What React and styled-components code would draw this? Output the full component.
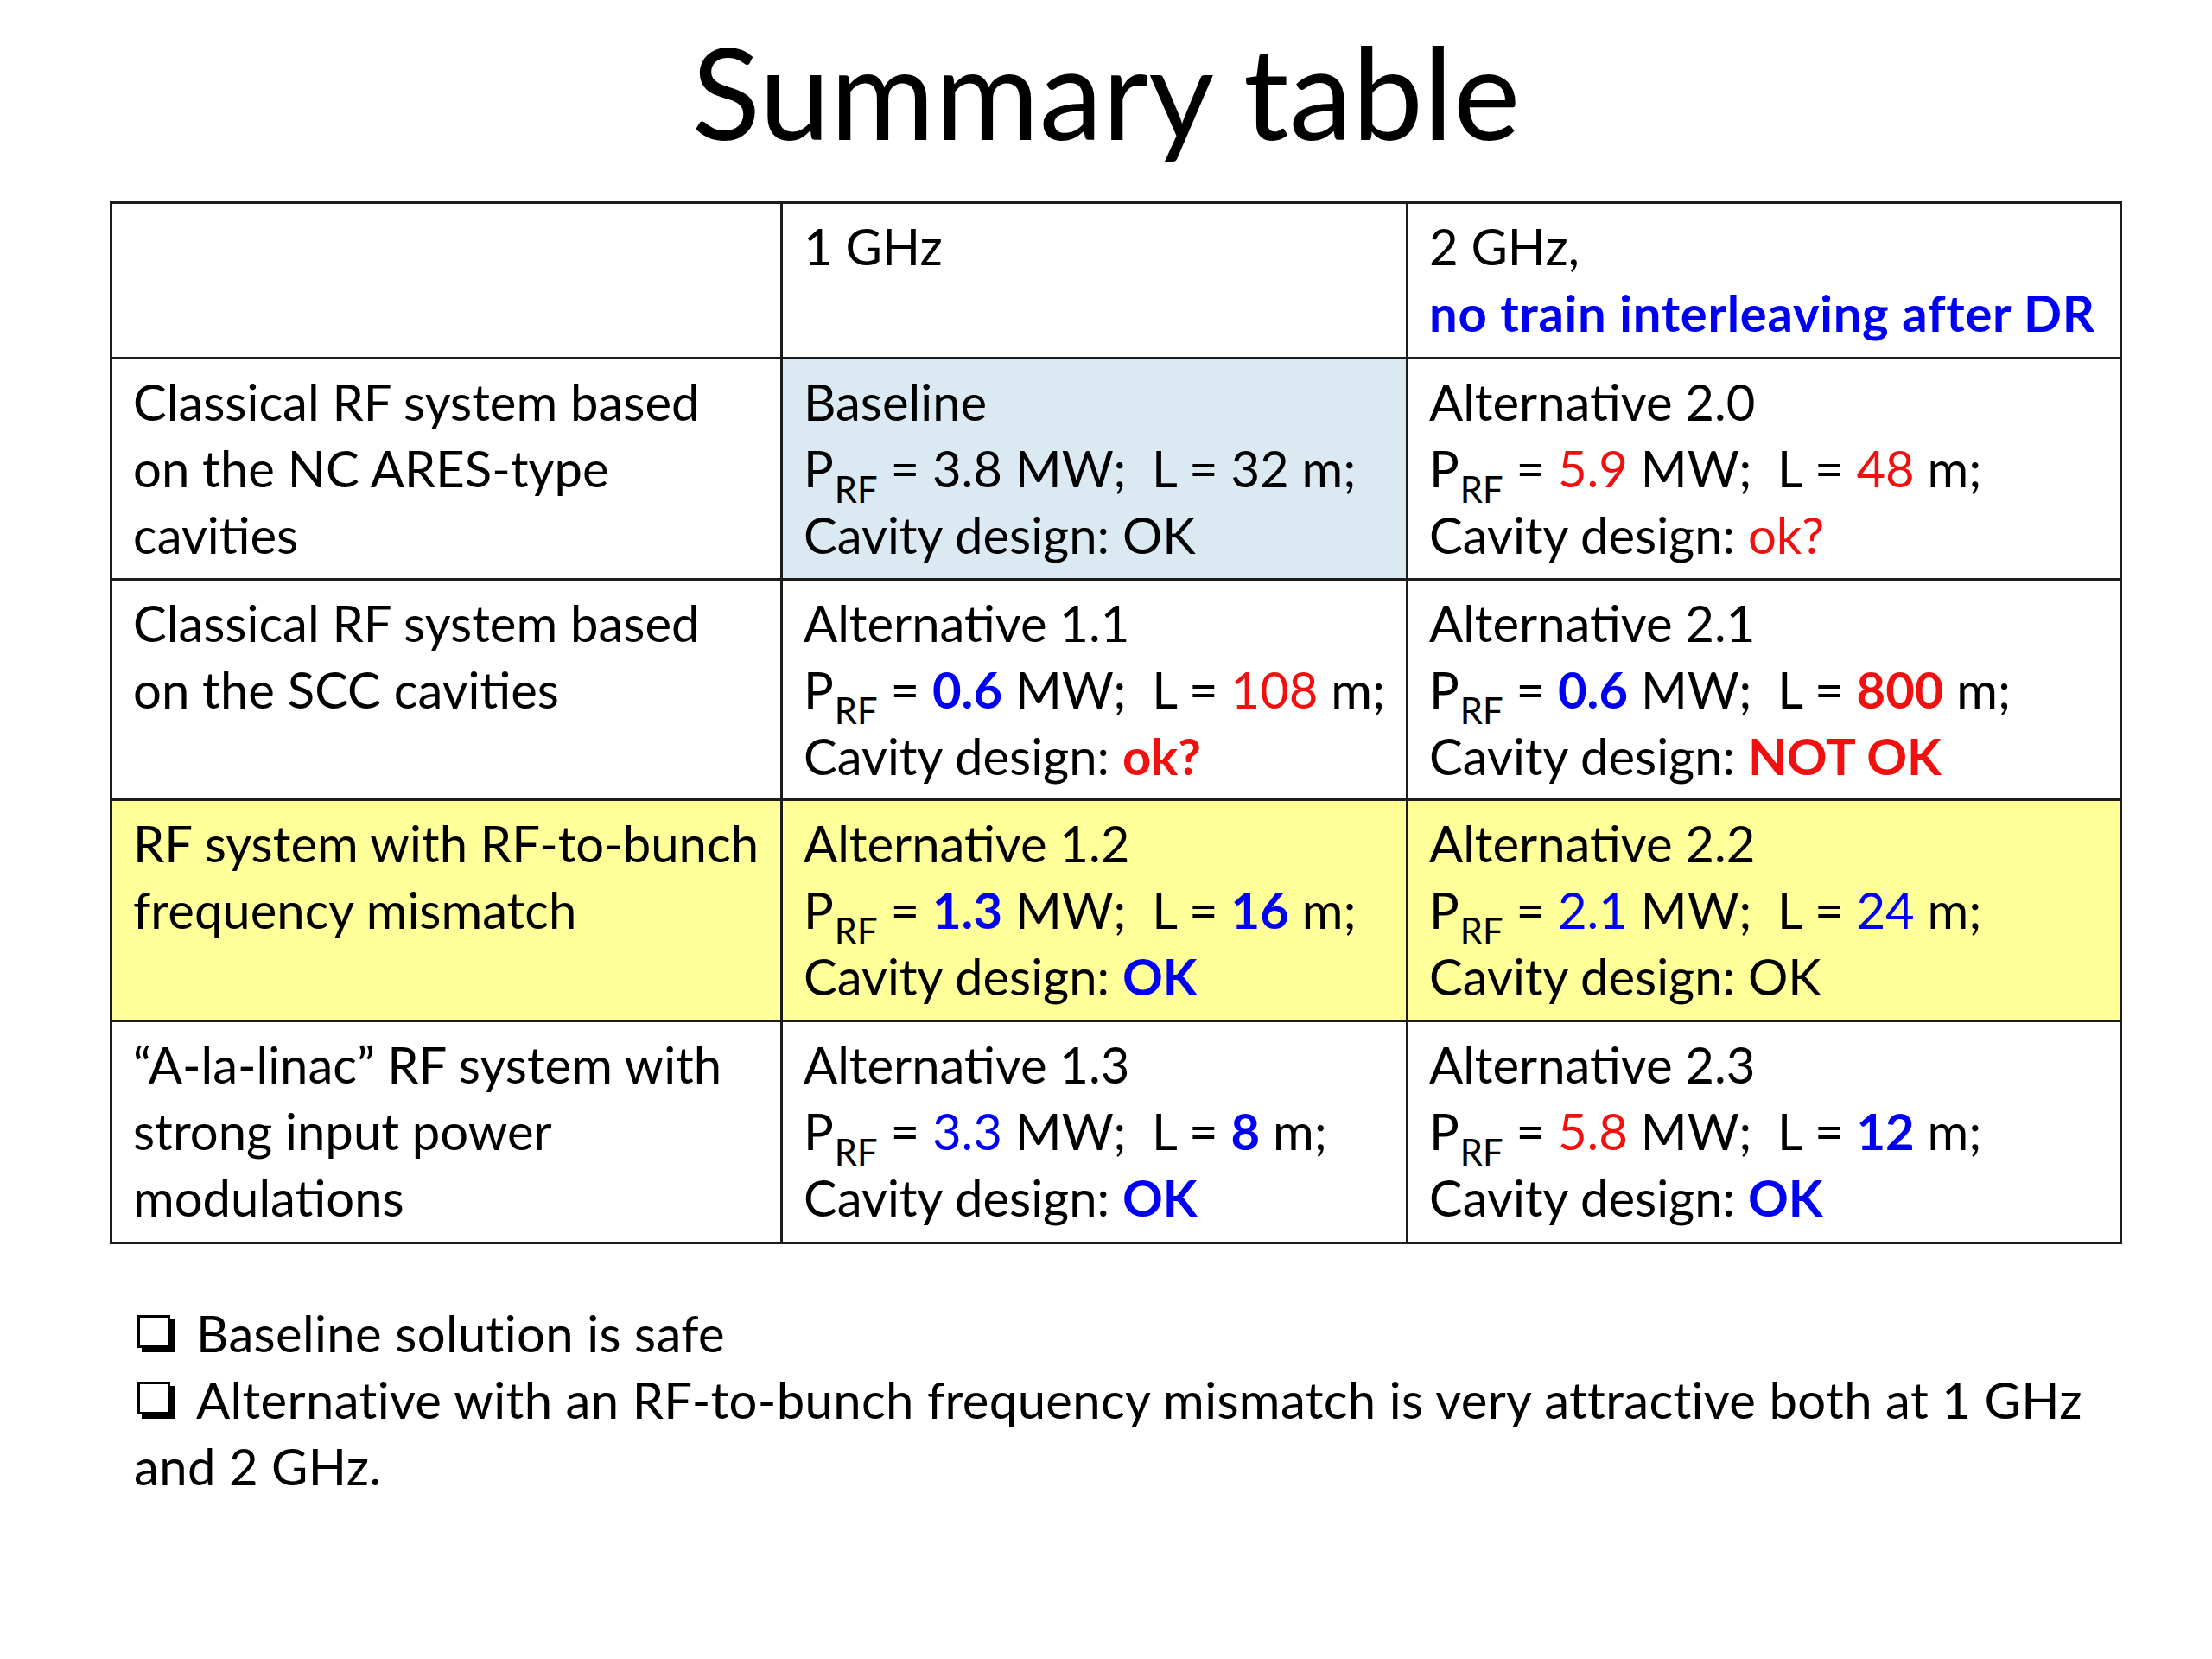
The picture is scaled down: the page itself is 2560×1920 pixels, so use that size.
import React from 'react';
import styled, { createGlobalStyle } from 'styled-components';

const GlobalStyle = createGlobalStyle`
  body {
    margin: 0;
    background: #ffffff;
    font-family: Lato, "Noto Sans", sans-serif;
    color: #000;
  }
`;

const BLUE = '#0000f2';
const RED = '#f01010';

const Slide = styled.div`
  width: 2560px;
  height: 1920px;
  box-sizing: border-box;
  padding-top: 33px;
  background: #fff;
`;

const Title = styled.h1`
  margin: 0 0 56px;
  text-align: center;
  font-family: Lato, sans-serif;
  font-weight: 400;
  font-size: 147px;
  line-height: 144px;
`;

const SummaryTable = styled.table`
  margin-left: 127px;
  width: 2326px;
  table-layout: fixed;
  border-collapse: collapse;
  font-size: 58px;
  line-height: 77px;
`;

const Row = styled.tr`
  height: ${({ $h }) => $h}px;
`;

const Cell = styled.td`
  border: 3px solid #1c1c1c;
  vertical-align: top;
  padding: 10px 10px 0 24px;
  background: ${({ $bg }) => $bg || 'transparent'};
  white-space: pre;
`;

const Line = styled.div``;

const Sub = styled.span`
  font-size: 0.72em;
  line-height: 0;
  vertical-align: -18px;
  margin-left: 1px;
`;

const Hl = styled.span`
  color: ${({ $c }) => ($c === 'red' ? RED : BLUE)};
  font-weight: ${({ $b }) => ($b ? 700 : 400)};
`;

const HeadNote = styled(Hl)`
  letter-spacing: 0.7px;
`;

const Notes = styled.div`
  margin: 64px 0 0 155px;
  font-size: 58px;
  line-height: 77px;
  letter-spacing: 0.35px;
`;

const NoteLine = styled.div`
  white-space: nowrap;
`;

const Checkbox = styled.span`
  display: inline-block;
  width: 32px;
  height: 32px;
  border: 3px solid #000;
  box-shadow: 5px 5px 0 #000;
  margin: 0 30px 5px 4px;
  background: #fff;
`;

const Prf = () => (
  <>
    P<Sub>RF</Sub>
  </>
);

const rows = [
  {
    h: 180,
    cells: [
      { lines: [''] },
      { lines: ['1 GHz'] },
      { lines: ['2 GHz,', <HeadNote $b>no train interleaving after DR</HeadNote>] },
    ],
  },
  {
    h: 256,
    cells: [
      { lines: ['Classical RF system based', 'on the NC ARES-type', 'cavities'] },
      {
        bg: '#dbeaf2',
        lines: [
          'Baseline',
          <><Prf /> = 3.8 MW;  L = 32 m;</>,
          'Cavity design: OK',
        ],
      },
      {
        lines: [
          'Alternative 2.0',
          <><Prf /> = <Hl $c="red">5.9</Hl> MW;  L = <Hl $c="red">48</Hl> m;</>,
          <>Cavity design: <Hl $c="red">ok?</Hl></>,
        ],
      },
    ],
  },
  {
    h: 255,
    cells: [
      { lines: ['Classical RF system based', 'on the SCC cavities'] },
      {
        lines: [
          'Alternative 1.1',
          <><Prf /> = <Hl $b>0.6</Hl> MW;  L = <Hl $c="red">108</Hl> m;</>,
          <>Cavity design: <Hl $c="red" $b>ok?</Hl></>,
        ],
      },
      {
        lines: [
          'Alternative 2.1',
          <><Prf /> = <Hl $b>0.6</Hl> MW;  L = <Hl $c="red" $b>800</Hl> m;</>,
          <>Cavity design: <Hl $c="red" $b>NOT OK</Hl></>,
        ],
      },
    ],
  },
  {
    h: 256,
    bg: '#ffff99',
    cells: [
      { lines: ['RF system with RF-to-bunch', 'frequency mismatch'] },
      {
        lines: [
          'Alternative 1.2',
          <><Prf /> = <Hl $b>1.3</Hl> MW;  L = <Hl $b>16</Hl> m;</>,
          <>Cavity design: <Hl $b>OK</Hl></>,
        ],
      },
      {
        lines: [
          'Alternative 2.2',
          <><Prf /> = <Hl>2.1</Hl> MW;  L = <Hl>24</Hl> m;</>,
          'Cavity design: OK',
        ],
      },
    ],
  },
  {
    h: 257,
    cells: [
      { lines: ['\u201cA-la-linac\u201d RF system with', 'strong input power', 'modulations'] },
      {
        lines: [
          'Alternative 1.3',
          <><Prf /> = <Hl>3.3</Hl> MW;  L = <Hl $b>8</Hl> m;</>,
          <>Cavity design: <Hl $b>OK</Hl></>,
        ],
      },
      {
        lines: [
          'Alternative 2.3',
          <><Prf /> = <Hl $c="red">5.8</Hl> MW;  L = <Hl $b>12</Hl> m;</>,
          <>Cavity design: <Hl $b>OK</Hl></>,
        ],
      },
    ],
  },
];

const App = () => (
  <Slide>
    <GlobalStyle />
    <Title>Summary table</Title>

    <SummaryTable>
      <colgroup>
        <col style={{ width: 776 }} />
        <col style={{ width: 724 }} />
        <col style={{ width: 826 }} />
      </colgroup>
      <tbody>
        {rows.map((row, i) => (
          <Row key={i} $h={row.h}>
            {row.cells.map((cell, j) => (
              <Cell key={j} $bg={cell.bg || row.bg}>
                {cell.lines.map((line, k) => (
                  <Line key={k}>{line}</Line>
                ))}
              </Cell>
            ))}
          </Row>
        ))}
      </tbody>
    </SummaryTable>

    <Notes>
      <NoteLine>
        <Checkbox />Baseline solution is safe
      </NoteLine>
      <NoteLine>
        <Checkbox />Alternative with an RF-to-bunch frequency mismatch is very attractive both at 1 GHz
      </NoteLine>
      <NoteLine>and 2 GHz.</NoteLine>
    </Notes>
  </Slide>
);

export default App;
